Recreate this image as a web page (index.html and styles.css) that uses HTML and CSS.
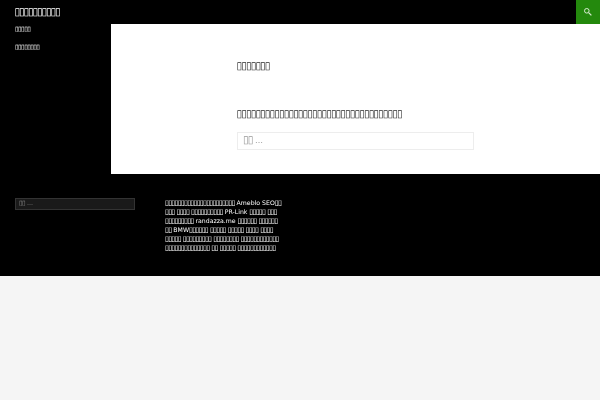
FILE: index.html
```html
<!DOCTYPE html>
<html lang="ja">
<head>
<meta charset="utf-8">
<title>Page</title>
<link rel="stylesheet" href="styles.css">
</head>
<body>
<header class="masthead">
  <h1 class="site-title"><span class="t">▯▯▯▯▯▯▯▯▯▯</span></h1>
  <div class="search-toggle">
    <svg width="10" height="10" viewBox="0 0 10 10"><circle cx="3.8" cy="3.8" r="2.3" fill="none" stroke="#d8ecd2" stroke-width="1"/><path d="M5.6 5.6l2.8 2.8" stroke="#d8ecd2" stroke-width="1.2"/></svg>
  </div>
</header>
<div class="middle">
  <nav class="side">
    <div class="nav-item"><span class="t">▯▯▯▯▯</span></div>
    <div class="nav-item"><span class="t">▯▯▯▯▯▯▯▯</span></div>
  </nav>
  <main class="content">
    <div class="inner">
      <h2 class="page-title"><span class="t">▯▯▯▯▯▯▯</span></h2>
      <p class="lead"><span class="t">▯▯▯▯▯▯▯▯▯▯▯▯▯▯▯▯▯▯▯▯▯▯▯▯▯▯▯▯▯▯▯▯▯▯▯</span></p>
      <div class="search"><span class="placeholder"><span class="t">▯▯</span> …</span></div>
    </div>
  </main>
</div>
<footer class="footer">
  <div class="side-search"><div class="search dark"><span class="placeholder"><span class="t">▯▯</span> …</span></div></div>
  <p class="blurb"><span class="t">▯▯▯▯▯▯▯▯▯▯▯▯▯▯▯▯▯▯▯▯▯▯</span> Ameblo SEO<span class="t">▯▯</span> <span class="t">▯▯▯</span> <span class="t">▯▯▯▯</span> <span class="t">▯▯▯▯▯▯▯▯▯▯</span> PR-Link <span class="t">▯▯▯▯▯</span> <span class="t">▯▯▯</span> <span class="t">▯▯▯▯▯▯▯▯▯</span> randazza.me <span class="t">▯▯▯▯▯▯</span> <span class="t">▯▯▯▯▯▯</span> <span class="t">▯▯</span> BMW<span class="t">▯▯▯▯▯▯</span> <span class="t">▯▯▯▯▯</span> <span class="t">▯▯▯▯▯</span> <span class="t">▯▯▯▯</span> <span class="t">▯▯▯▯</span> <span class="t">▯▯▯▯▯</span> <span class="t">▯▯▯▯▯▯▯▯▯</span> <span class="t">▯▯▯▯▯▯▯▯</span> <span class="t">▯▯▯▯▯▯▯▯▯▯▯▯</span> <span class="t">▯▯▯▯▯▯▯▯▯▯▯▯▯▯</span> <span class="t">▯▯</span> <span class="t">▯▯▯▯▯</span> <span class="t">▯▯▯▯▯▯▯▯▯▯▯▯</span></p>
</footer>
</body>
</html>
```
FILE: styles.css
```css
html, body { margin: 0; padding: 0; }
body {
  background: #f5f5f5;
  font-family: "DejaVu Sans", sans-serif;
  font-size: 8px;
  color: #2b2b2b;
  text-rendering: geometricPrecision;
}
.t {
  font-size: 1.3em;
  letter-spacing: -0.096em;
  line-height: 0;
}
.site-title .t { letter-spacing: -0.117em; }
.side .t, .dark .t {
  font-size: 1.1em;
  letter-spacing: -0.088em;
}
.blurb .t {
  font-size: 1.15em;
  letter-spacing: -0.105em;
}
.masthead {
  height: 24px;
  background: #000;
  display: flex;
  justify-content: space-between;
  color: #fff;
}
.site-title {
  margin: 0;
  padding: 1px 0 0 14.5px;
  font-size: 8px;
  font-weight: 400;
  line-height: 23px;
  filter: blur(.25px);
}
.search-toggle {
  width: 24px;
  height: 24px;
  background: #24890d;
  display: flex;
  align-items: center;
  justify-content: center;
}
.middle {
  display: flex;
  height: 150px;
  background: #000;
}
.side {
  width: 111px;
  box-sizing: border-box;
  padding: 1px 0 0 15px;
  color: #fff;
  font-size: 6px;
  filter: blur(.25px);
}
.nav-item { height: 18px; line-height: 10px; }
.content {
  flex: 1;
  background: #fff;
  padding-left: 126px;
}
.inner { width: 237px; padding-top: 37px; }
.page-title { margin: 0 0 36px -.5px; font-size: 8px; font-weight: 400; line-height: 12px; filter: blur(.25px); }
.lead { margin: 0 0 11px -.5px; font-size: 8px; line-height: 12px; filter: blur(.25px); }
.search {
  height: 18px;
  line-height: 16px;
  box-sizing: border-box;
  border: 1px solid rgba(0,0,0,.07);
  padding-left: 5px;
  color: #999;
}
.placeholder { filter: blur(.25px); display: inline-block; }
.footer {
  display: flex;
  height: 102px;
  background: #000;
  color: #fff;
  box-sizing: border-box;
  padding: 24px 0 0 15px;
}
.side-search { width: 120px; margin-right: 30px; }
.search.dark {
  height: 12px;
  line-height: 10px;
  font-size: 6px;
  padding-left: 3px;
  background: #1a1a1a;
  border-color: #333;
  color: #888;
}
.blurb { margin: 0; padding-top: 1px; width: 120px; font-size: 6.2px; line-height: 9px; filter: blur(.2px); }
```
